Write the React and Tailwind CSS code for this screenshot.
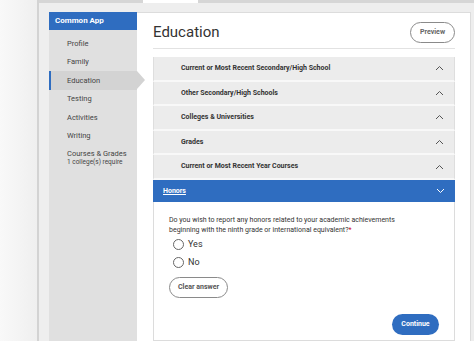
const sections = [
  'Current or Most Recent Secondary/High School',
  'Other Secondary/High Schools',
  'Colleges & Universities',
  'Grades',
  'Current or Most Recent Year Courses',
];

const navItems = ['Profile', 'Family', 'Education', 'Testing', 'Activities', 'Writing'];

function Chevron({ up = true, className = '' }) {
  return (
    <svg width="9" height="6" viewBox="0 0 9 6" className={className}>
      <polyline
        points={up ? '1,5 4.5,1.5 8,5' : '1,1 4.5,4.5 8,1'}
        fill="none"
        stroke="currentColor"
        strokeWidth="1"
      />
    </svg>
  );
}

function Radio({ label }) {
  return (
    <label className="h-[18px] flex items-center gap-[4px] pl-[4px]">
      <span className="w-[11px] h-[11px] rounded-full border border-[#666] bg-white" />
      <span className="text-[9px] text-[#333]">{label}</span>
    </label>
  );
}

export default function App() {
  return (
    <div className="w-[474px] h-[341px] overflow-hidden flex bg-[#f6f6f6] font-['Roboto','Liberation_Sans',sans-serif]">
      {/* Left backdrop */}
      <div className="w-[37px] shrink-0 bg-gradient-to-r from-[#f9f9f9] to-[#efefef]" />

      {/* Window frame */}
      <div className="flex-1 flex flex-col border-l-2 border-[#d3d3d3]">
        <div className="h-[3px] shrink-0 flex">
          <div className="w-[104px] bg-[#d6d6d6]" />
          <div className="w-[55px] bg-white" />
          <div className="flex-1 bg-[#d6d6d6]" />
        </div>

        <div className="flex-1 flex bg-[#eeeeee] pt-[9px]">
          <div className="w-[10px] shrink-0" />

          {/* Sidebar */}
          <aside className="w-[88px] shrink-0 bg-[#e0e0e0] flex flex-col">
            <div className="h-[18px] bg-[#2f6dc0] flex items-center pl-[6px]">
              <span className="text-white text-[8px] font-bold">Common App</span>
            </div>
            <ul className="pt-[4px]">
              {navItems.map(item => {
                const active = item === 'Education';
                return (
                  <li
                    key={item}
                    className={`relative h-[18.5px] flex items-center text-[7.5px] text-[#444] ${
                      active ? 'bg-[#d3d3d3] border-l-2 border-[#2f6dc0] pl-[16px]' : 'pl-[18px]'
                    }`}
                  >
                    {item}
                    {active && (
                      <span className="absolute left-full top-0 w-0 h-0 border-y-[9.25px] border-y-transparent border-l-[8px] border-l-[#d3d3d3]" />
                    )}
                  </li>
                );
              })}
              <li className="pl-[18px] pt-[4px] text-[#444] leading-[9px]">
                <div className="text-[7.5px]">Courses &amp; Grades</div>
                <div className="text-[6.5px]">1 college(s) require</div>
              </li>
            </ul>
          </aside>

          {/* Main card */}
          <main className="flex-1 bg-white border-t border-r border-[#dcdcdc] pl-[16px] pr-[15px] flex flex-col">
            <div className="h-[36px] pt-[4px] shrink-0 flex items-center justify-between border-b border-[#e2e2e2]">
              <h1 className="text-[15px] text-[#333] font-normal">Education</h1>
              <button className="w-[45px] h-[21px] rounded-full border border-[#8a8a8a] text-[7px] font-bold text-[#666]">
                Preview
              </button>
            </div>

            <div className="mt-[8px] flex-1 flex flex-col">
              {sections.map(s => (
                <div
                  key={s}
                  className="h-[24.6px] shrink-0 border-b-2 border-b-[#f8f8f8] border-x border-x-[#dedede] bg-[#ececec] flex items-center justify-between pl-[27px] pr-[10px] text-[#333]"
                >
                  <span className="text-[7px] font-bold">{s}</span>
                  <Chevron className="text-[#555]" />
                </div>
              ))}
              <div className="h-[22px] shrink-0 bg-[#2f6dc0] flex items-center justify-between pl-[10px] pr-[10px] text-white">
                <span className="text-[7px] font-bold underline">Honors</span>
                <Chevron up={false} />
              </div>

              <div className="flex-1 border-x border-b border-[#dcdcdc] pl-[15px] pr-[15px] pt-[13px] pb-[3px] flex flex-col">
                <p className="text-[7px] leading-[10px] text-[#333]">
                  Do you wish to report any honors related to your academic achievements
                  <br />
                  beginning with the ninth grade or international equivalent?
                  <span className="text-[#d0021b]">*</span>
                </p>
                <div className="mt-[1px] flex flex-col">
                  <Radio label="Yes" />
                  <Radio label="No" />
                </div>
                <button className="mt-[5px] w-[59px] h-[21px] rounded-full border border-[#8a8a8a] text-[7px] font-bold text-[#555]">
                  Clear answer
                </button>
                <div className="mt-[16px] flex justify-end">
                  <button className="w-[47px] h-[21px] rounded-full bg-[#2f6dc0] text-white text-[7px] font-bold">
                    Continue
                  </button>
                </div>
              </div>
            </div>
          </main>

          <div className="w-[3px] shrink-0" />
        </div>
      </div>
    </div>
  );
}
